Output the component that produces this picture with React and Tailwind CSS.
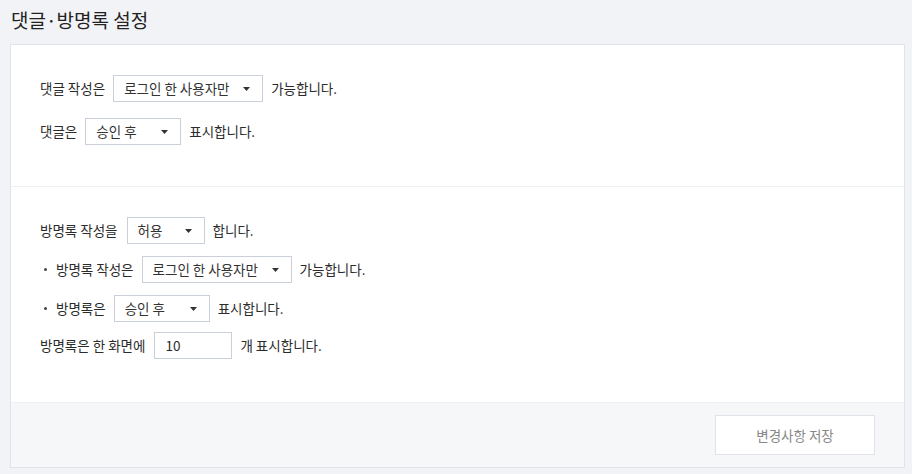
import React from "react";

function Select({ value, w }) {
  return (
    <div
      className={`flex items-center justify-between h-[27px] border border-[#c9d0d9] bg-white pl-[10px] pr-[12px] text-[13.5px] text-[#333] ${w}`}
    >
      <span>{value}</span>
      <svg width="7" height="4" viewBox="0 0 7 4" className="mt-[1px]">
        <path d="M0 0h7L3.5 4z" fill="#333" />
      </svg>
    </div>
  );
}

function Row({ children, className = "" }) {
  return <div className={`flex items-center h-[27px] gap-[8px] ${className}`}>{children}</div>;
}

function Bullet() {
  return (
    <span className="flex items-center pl-[4px] mr-[1px]">
      <span className="w-[3px] h-[3px] rounded-full bg-[#444]" />
    </span>
  );
}

export default function App() {
  return (
    <div
      className="w-[912px] h-[474px] bg-[#f2f3f6] text-[#2b2b2b] text-[13.5px]"
      style={{ fontFamily: '"Noto Sans CJK KR", "Noto Sans", sans-serif' }}
    >
      <div className="h-[44px] pl-[11px] pt-[6px] text-[19px] text-[#222] leading-[28px]">댓글·방명록 설정</div>
      <div className="ml-[10px] w-[895px] h-[424px] border border-[#dfe3ea] bg-white flex flex-col">
        <div className="pt-[30px] pb-[41px] pl-[29px] flex flex-col gap-[16px] border-b border-[#eef0f3]">
          <Row>
            <span>댓글 작성은</span>
            <Select value="로그인 한 사용자만" w="w-[150px]" />
            <span>가능합니다.</span>
          </Row>
          <Row>
            <span>댓글은</span>
            <Select value="승인 후" w="w-[96px]" />
            <span>표시합니다.</span>
          </Row>
        </div>
        <div className="pt-[30px] pl-[29px] flex flex-col flex-1">
          <Row>
            <span className="mr-[1px]">방명록 작성을</span>
            <Select value="허용" w="w-[78px]" />
            <span>합니다.</span>
          </Row>
          <Row className="mt-[12px]">
            <Bullet />
            <span>방명록 작성은</span>
            <Select value="로그인 한 사용자만" w="w-[150px]" />
            <span>가능합니다.</span>
          </Row>
          <Row className="mt-[12px]">
            <Bullet />
            <span>방명록은</span>
            <Select value="승인 후" w="w-[96px]" />
            <span>표시합니다.</span>
          </Row>
          <Row className="mt-[10px]">
            <span className="mr-[1px]">방명록은 한 화면에</span>
            <div className="w-[78px] h-[27px] border border-[#c9d0d9] flex items-center pl-[10px]">10</div>
            <span>개 표시합니다.</span>
          </Row>
        </div>
        <div className="h-[65px] bg-[#f6f7f9] border-t border-[#eef0f3] flex justify-end items-start pt-[12px] pr-[29px]">
          <button className="w-[160px] h-[40px] border border-[#e0e4ea] bg-white text-[#888] text-[13.5px]">
            변경사항 저장
          </button>
        </div>
      </div>
    </div>
  );
}
